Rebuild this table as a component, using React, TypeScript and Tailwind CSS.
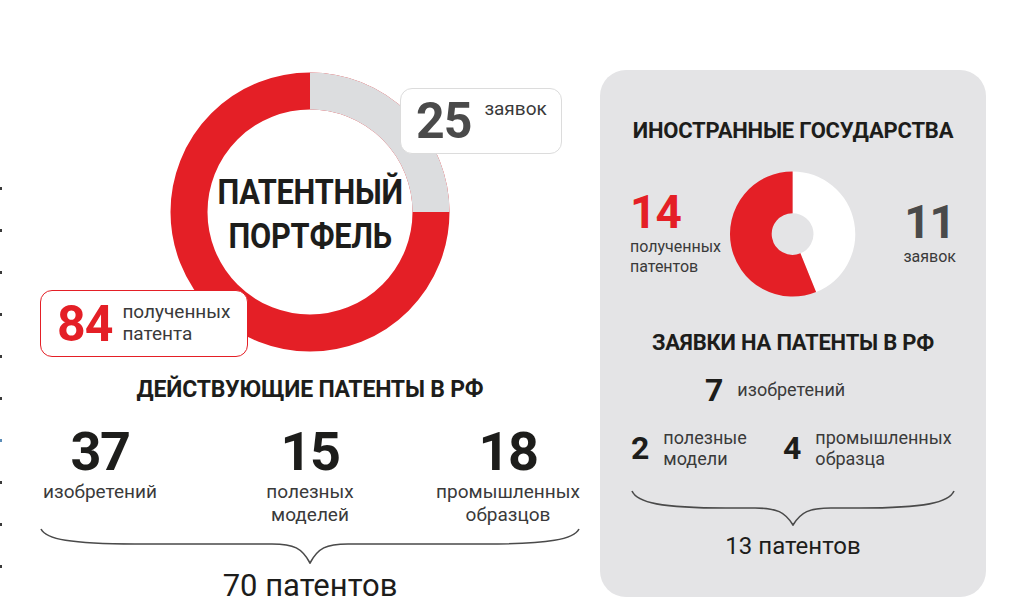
import React from 'react';

const RED = '#e41f26';

// curly brace under a group of numbers
const Brace = ({ width, height, flat }: { width: number; height: number; flat: number }) => {
  const mid = width / 2;
  const f = flat;
  return (
    <svg width={width} height={height} viewBox={`0 0 ${width} ${height}`} fill="none">
      <path
        d={`M1 1 C 6 ${f * 0.7}, 30 ${f}, 95 ${f} L ${mid - 38} ${f} C ${mid - 16} ${f}, ${mid - 8} ${f + 4}, ${mid} ${height - 1} C ${mid + 8} ${f + 4}, ${mid + 16} ${f}, ${mid + 38} ${f} L ${width - 95} ${f} C ${width - 30} ${f}, ${width - 6} ${f * 0.7}, ${width - 1} 1`}
        stroke="#4a4a4a"
        strokeWidth="1.6"
      />
    </svg>
  );
};

// arc helper for donut segments (angles clockwise from 12 o'clock)
const arc = (cx: number, cy: number, r: number, a0: number, a1: number) => {
  const p = (a: number) => {
    const rad = ((a - 90) * Math.PI) / 180;
    return `${cx + r * Math.cos(rad)} ${cy + r * Math.sin(rad)}`;
  };
  const large = a1 - a0 > 180 ? 1 : 0;
  return `M ${p(a0)} A ${r} ${r} 0 ${large} 1 ${p(a1)}`;
};

const App = () => {
  return (
    <div className="relative flex h-[607px] w-[1024px] overflow-hidden bg-white font-['Roboto','Liberation_Sans',sans-serif] text-[#1d1d1b]">
      {/* dotted edge */}
      <div className="absolute left-0 top-[187px] flex flex-col gap-[39px]">
        {Array.from({ length: 11 }).map((_, i) => (
          <div key={i} className={`h-[3px] w-[2px] ${i === 6 ? 'bg-[#5b8db8]' : 'bg-[#3a3a3a]'}`} />
        ))}
      </div>

      {/* Left column */}
      <div className="ml-[30px] flex w-[560px] flex-col items-center">
        <div className="relative mt-[72px] flex h-[288px] w-[560px] justify-center">
          <div className="relative flex h-[280px] w-[280px] items-center justify-center">
            <svg className="absolute inset-0" width="280" height="280" viewBox="0 0 280 280">
              <circle cx="140" cy="140" r="121" fill="none" stroke={RED} strokeWidth="37" />
              <path d={arc(140, 140, 121, 0, 90)} fill="none" stroke="#dcdddf" strokeWidth="37" />
            </svg>
            <div className="relative mt-[6px] scale-x-[0.88] text-center text-[35px] font-bold leading-[44px] tracking-[-0.3px] text-[#1d1d1b]">
              ПАТЕНТНЫЙ
              <br />
              ПОРТФЕЛЬ
            </div>
          </div>

          <div className="absolute left-[370px] top-[16px] flex h-[66px] w-[162px] items-start rounded-[12px] border border-[#dcdcdc] bg-white pl-[15px] pt-[5px]">
            <span className="text-[50px] font-bold leading-[54px] tracking-[-1px] text-[#4a4a4a]">25</span>
            <span className="ml-[13px] mt-[4px] text-[19px] leading-[22px] text-[#3a3a3a]">заявок</span>
          </div>

          <div className="absolute left-[10px] top-[218px] flex h-[67px] w-[208px] items-center rounded-[12px] border-[1.5px] border-[#e41f26] bg-white pl-[16px]">
            <span className="text-[50px] font-bold leading-[54px] tracking-[-1px] text-[#e41f26]">84</span>
            <span className="ml-[10px] pb-[2px] text-[19px] leading-[22px] text-[#3a3a3a]">
              полученных
              <br />
              патента
            </span>
          </div>
        </div>

        <div className="mt-[17px] text-[23px] font-bold leading-[26px] tracking-[-0.2px]">ДЕЙСТВУЮЩИЕ ПАТЕНТЫ В РФ</div>

        <div className="mt-[22px] flex w-[560px] items-start">
          <div className="flex w-[140px] flex-col items-center">
            <div className="text-[54px] font-bold leading-[54px] tracking-[-1.5px]">37</div>
            <div className="mt-[1px] text-[19px] leading-[23px] text-[#3a3a3a]">изобретений</div>
          </div>
          <div className="ml-[70px] flex w-[140px] flex-col items-center">
            <div className="text-[54px] font-bold leading-[54px] tracking-[-1.5px]">15</div>
            <div className="mt-[1px] text-center text-[19px] leading-[23px] text-[#3a3a3a]">
              полезных
              <br />
              моделей
            </div>
          </div>
          <div className="ml-[50px] flex w-[156px] flex-col items-center">
            <div className="text-[54px] font-bold leading-[54px] tracking-[-1.5px]">18</div>
            <div className="mt-[1px] text-center text-[19px] leading-[23px] text-[#3a3a3a]">
              промышленных
              <br />
              образцов
            </div>
          </div>
        </div>

        <div className="mt-[2px]">
          <Brace width={540} height={36} flat={16} />
        </div>

        <div className="mt-[5px] text-[31px] leading-[34px] text-[#1d1d1b]">70 патентов</div>
      </div>

      {/* Right panel */}
      <div className="ml-[10px] mt-[70px] flex h-[527px] w-[386px] flex-col items-center rounded-[26px] bg-[#e4e4e6]">
        <div className="mt-[48px] text-[22px] font-bold leading-[26px] tracking-[-0.2px]">ИНОСТРАННЫЕ ГОСУДАРСТВА</div>

        <div className="mt-[26px] flex w-full items-center justify-between px-[30px]">
          <div className="flex w-[100px] flex-col">
            <div className="text-[46px] font-bold leading-[42px] tracking-[-1px] text-[#e41f26]">14</div>
            <div className="mt-[4px] text-[16px] leading-[20px] text-[#3a3a3a]">
              полученных
              <br />
              патентов
            </div>
          </div>
          <svg width="128" height="128" viewBox="0 0 128 128">
            <path d={arc(64, 64, 42, 0, 158)} fill="none" stroke="#ffffff" strokeWidth="42" />
            <path d={arc(64, 64, 42, 158, 360)} fill="none" stroke={RED} strokeWidth="42" />
          </svg>
          <div className="flex w-[100px] flex-col items-end">
            <div className="mr-[1px] text-[46px] font-bold leading-[42px] tracking-[-1px] text-[#4a4a4a]">11</div>
            <div className="mt-[4px] text-[16px] leading-[20px] text-[#3a3a3a]">заявок</div>
          </div>
        </div>

        <div className="mt-[32px] text-[22px] font-bold leading-[26px] tracking-[-0.2px]">ЗАЯВКИ НА ПАТЕНТЫ В РФ</div>

        <div className="ml-[105px] mt-[16px] flex items-center self-start">
          <span className="text-[32px] font-bold leading-[36px]">7</span>
          <span className="ml-[14px] text-[18px] leading-[20px] text-[#3a3a3a]">изобретений</span>
        </div>

        <div className="mt-[19px] flex w-full items-center pl-[31px]">
          <div className="flex w-[152px] items-center">
            <span className="text-[32px] font-bold leading-[36px]">2</span>
            <span className="ml-[14px] text-[18px] leading-[21px] text-[#3a3a3a]">
              полезные
              <br />
              модели
            </span>
          </div>
          <span className="text-[32px] font-bold leading-[36px]">4</span>
          <span className="ml-[14px] text-[18px] leading-[21px] text-[#3a3a3a]">
            промышленных
            <br />
            образца
          </span>
        </div>

        <div className="mt-[21px]">
          <Brace width={324} height={36} flat={18} />
        </div>

        <div className="mt-[6px] text-[24px] leading-[28px]">13 патентов</div>
      </div>
    </div>
  );
};

export default App;
